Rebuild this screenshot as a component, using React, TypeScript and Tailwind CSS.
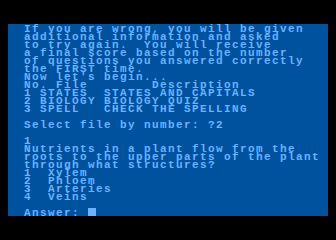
const lines = [
  "If you are wrong, you will be given",
  "additional information and asked",
  "to try again.  You will receive",
  "a final score based on the number",
  "of questions you answered correctly",
  "the FIRST time.",
  "Now let's begin...",
  "No. File        Description",
  "1 STATES  STATES AND CAPITALS",
  "2 BIOLOGY BIOLOGY QUIZ",
  "3 SPELL   CHECK THE SPELLING",
  "",
  "Select file by number: ?2",
  "",
  "1",
  "Nutrients in a plant flow from the",
  "roots to the upper parts of the plant",
  "through what structures?",
  "1  Xylem",
  "2  Phloem",
  "3  Arteries",
  "4  Veins",
  "",
]

export default function App() {
  return (
    <div className="w-[336px] h-[240px] bg-black overflow-hidden">
      <div className="ml-[8px] mt-[24px] w-[320px] h-[192px] bg-[#00529e] pl-[16px] font-['Liberation_Mono',monospace] font-bold text-[11px] leading-[8px] tracking-[1.4px] text-[#6cb2ff]">
        <div className="translate-y-[1px]">
          {lines.map((line, i) => (
            <div key={i} className="h-[8px] whitespace-pre">
              {line}
            </div>
          ))}
        </div>
        <div className="h-[8px] whitespace-pre flex">
          <span className="translate-y-[1px]">Answer: </span>
          <span className="w-[8px] h-[8px] bg-[#6cb2ff]" />
        </div>
      </div>
    </div>
  )
}
